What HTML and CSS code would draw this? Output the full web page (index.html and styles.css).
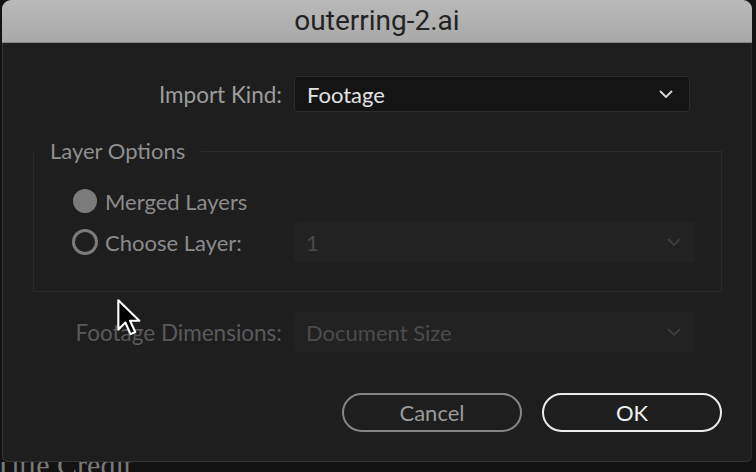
FILE: index.html
```html
<!DOCTYPE html>
<html>
<head>
<meta charset="utf-8">
<link rel="stylesheet" href="styles.css">
</head>
<body>
<div class="screen">
  <div class="dialog">
    <div class="titlebar">outerring-2.ai</div>
    <div class="content">
      <div class="row import">
        <span class="label">Import Kind:</span>
        <div class="select active">
          <span>Footage</span>
          <svg class="chev" width="14" height="8" viewBox="0 0 14 8"><path d="M1 1 L7 7 L13 1" fill="none" stroke="currentColor" stroke-width="1.8"/></svg>
        </div>
      </div>

      <fieldset class="group">
        <legend>Layer Options</legend>
        <div class="radio-row first">
          <span class="radio filled"></span>
          <span class="rlabel">Merged Layers</span>
        </div>
        <div class="radio-row second">
          <div class="rl">
            <span class="radio ring"></span>
            <span class="rlabel">Choose Layer:</span>
          </div>
          <div class="select disabled">
            <span>1</span>
            <svg class="chev" width="14" height="8" viewBox="0 0 14 8"><path d="M1 1 L7 7 L13 1" fill="none" stroke="currentColor" stroke-width="1.8"/></svg>
          </div>
        </div>
      </fieldset>

      <div class="row dims">
        <span class="label dim">Footage Dimensions:</span>
        <div class="select disabled">
          <span>Document Size</span>
          <svg class="chev" width="14" height="8" viewBox="0 0 14 8"><path d="M1 1 L7 7 L13 1" fill="none" stroke="currentColor" stroke-width="1.8"/></svg>
        </div>
      </div>

      <div class="buttons">
        <div class="btn cancel">Cancel</div>
        <div class="btn ok">OK</div>
      </div>
    </div>
    <svg class="cursor" width="28" height="42" viewBox="0 0 24 36">
      <path d="M2 2 L2 27 L8 21 L12.5 31 L16.5 29.2 L12 19.5 L20 19.5 Z" fill="#000" stroke="#fff" stroke-width="1.8" stroke-linejoin="round"/>
    </svg>
  </div>
  <div class="behind"><span>Title Credit</span></div>
</div>
</body>
</html>
```
FILE: styles.css
```css
html, body {
  margin: 0;
  padding: 0;
  background: #131313;
  overflow: hidden;
}
.screen {
  width: 756px;
  height: 472px;
  overflow: hidden;
  font-family: Lato, "Open Sans", sans-serif;
}
.dialog {
  position: relative;
  margin-left: 2px;
  width: 750px;
  height: 462px;
  background: #1e1e1e;
  border-radius: 9px 9px 6px 6px;
  overflow: hidden;
  box-shadow: inset 1px 0 0 #333, inset -1px 0 0 #2a2a2a, inset 0 -1px 0 #333;
}
.titlebar {
  height: 43px;
  box-sizing: border-box;
  background: linear-gradient(#b9b9b9, #a9a9a9);
  border-bottom: 1px solid #858585;
  display: flex;
  align-items: center;
  justify-content: center;
  font-family: Roboto, "Liberation Sans", sans-serif;
  font-size: 28px;
  color: #232323;
  padding-bottom: 1px;
}
.content {
  padding-top: 33px;
}
.row {
  display: grid;
  grid-template-columns: 280px 401px;
  column-gap: 12px;
  align-items: center;
}
.label {
  text-align: right;
  font-size: 22.5px;
  color: #9d9d9d;
}
.label.dim {
  color: #5a5a5a;
}
.select {
  height: 40px;
  box-sizing: border-box;
  display: flex;
  align-items: center;
  justify-content: space-between;
  padding: 0 14px 0 12px;
  font-size: 22px;
  border-radius: 3px;
}
.select.active {
  width: 396px;
  height: 36px;
  background: #141414;
  border: 1px solid #2c2c2c;
  color: #e2e2e2;
}
.select.active .chev {
  color: #d8d8d8;
  margin-right: 2px;
}
.select.disabled {
  background: #222;
  color: #4c4c4c;
}
.select.disabled .chev {
  color: #3e3e3e;
}
.group {
  margin: 26px 0 0 31px;
  width: 689px;
  box-sizing: border-box;
  border: 1px solid #2b2b2b;
  padding: 0 0 31px 38px;
  height: 154px;
}
.group legend {
  margin-left: -38px;
  padding: 0 16px 0 16px;
  font-size: 22px;
  line-height: 26px;
  color: #8f8f8f;
}
.radio-row {
  display: flex;
  align-items: center;
}
.radio-row.first {
  margin-top: 23px;
  height: 28px;
}
.radio-row.second {
  margin-top: 7px;
  display: grid;
  grid-template-columns: 222px 401px;
  align-items: center;
}
.rl {
  display: flex;
  align-items: center;
}
.radio {
  display: inline-block;
  box-sizing: border-box;
  width: 26px;
  height: 26px;
  border-radius: 50%;
  margin-right: 7px;
  flex: none;
}
.radio.filled {
  width: 24px;
  height: 24px;
  margin: 0 8px 0 1px;
  background: #7b7b7b;
}
.radio.ring {
  border: 3px solid #7b7b7b;
}
.rlabel {
  font-size: 22px;
  color: #8b8b8b;
}
.row.dims {
  margin-top: 20px;
}
.buttons {
  display: flex;
  justify-content: flex-end;
  gap: 20px;
  margin-top: 41px;
  padding-right: 30px;
}
.btn {
  width: 180px;
  height: 39px;
  box-sizing: border-box;
  border-radius: 20px;
  display: flex;
  align-items: center;
  justify-content: center;
  font-size: 22px;
}
.btn.cancel {
  border: 2.5px solid #858585;
  color: #9a9a9a;
}
.btn.ok {
  border: 2.5px solid #ececec;
  color: #f0f0f0;
}
.cursor {
  position: absolute;
  left: 114px;
  top: 298px;
}
.behind {
  height: 10px;
  overflow: hidden;
  position: relative;
}
.behind span {
  display: block;
  margin-top: -12px;
  margin-left: -6px;
  font-family: "Liberation Serif", serif;
  font-size: 30px;
  line-height: 30px;
  color: #7a7a7a;
}
```
